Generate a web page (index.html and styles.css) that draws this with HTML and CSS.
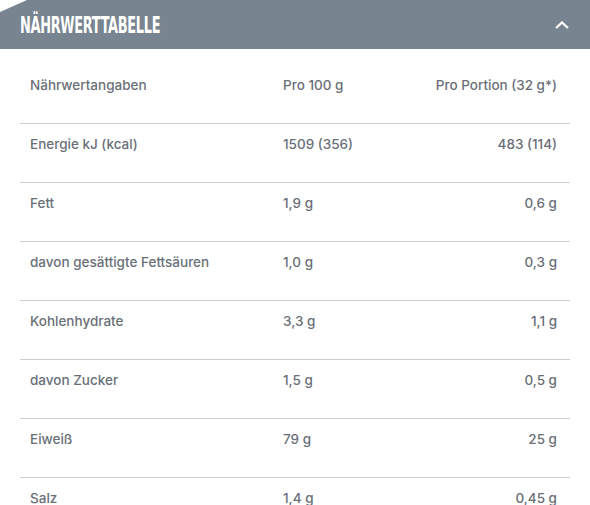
FILE: index.html
```html
<!DOCTYPE html>
<html lang="de">
<head>
<meta charset="utf-8">
<link rel="stylesheet" href="styles.css">
</head>
<body>
<section class="panel">
  <header class="panel-head">
    <h2 class="panel-title"><span>NÄHRWERTTABELLE</span></h2>
    <svg class="chevron" width="14" height="8" viewBox="0 0 14 8"><path d="M1 7 L7 1.5 L13 7" fill="none" stroke="#fff" stroke-width="2.2"/></svg>
  </header>
  <table class="nutri">
    <tr><td>Nährwertangaben</td><td>Pro 100 g</td><td>Pro Portion (32 g*)</td></tr>
    <tr><td>Energie kJ (kcal)</td><td>1509 (356)</td><td>483 (114)</td></tr>
    <tr><td>Fett</td><td>1,9 g</td><td>0,6 g</td></tr>
    <tr><td>davon gesättigte Fettsäuren</td><td>1,0 g</td><td>0,3 g</td></tr>
    <tr><td>Kohlenhydrate</td><td>3,3 g</td><td>1,1 g</td></tr>
    <tr><td>davon Zucker</td><td>1,5 g</td><td>0,5 g</td></tr>
    <tr><td>Eiweiß</td><td>79 g</td><td>25 g</td></tr>
    <tr><td>Salz</td><td>1,4 g</td><td>0,45 g</td></tr>
  </table>
</section>
</body>
</html>
```
FILE: styles.css
```css
html, body { margin: 0; padding: 0; background: #fff; }
body { width: 590px; height: 505px; overflow: hidden; }
.panel { width: 590px; }
.panel-head {
  height: 49px;
  background: #788490;
  display: flex;
  align-items: center;
  justify-content: space-between;
  padding: 0 21px 0 20px;
  box-sizing: border-box;
  clip-path: polygon(27px 0, 100% 0, 100% 100%, 0 100%, 0 12px);
}
.panel-title {
  margin: 0;
  font-family: "DejaVu Sans Condensed", "DejaVu Sans", sans-serif;
  font-weight: bold;
  font-size: 23px;
  line-height: 23px;
  color: #fff;
  letter-spacing: -0.5px;
  padding-top: 2px;
}
.panel-title span { display: inline-block; transform: scaleX(0.625); transform-origin: left center; }
.chevron { display: block; margin-top: 1px; }
.nutri {
  width: 550px;
  margin: 16px 20px 0;
  border-collapse: collapse;
  font-family: Inter, "Liberation Sans", sans-serif;
  font-size: 13.5px;
  font-weight: 500;
  line-height: 18px;
  color: #6a6f78;
}
.nutri td { padding: 11px 10px 29px; white-space: nowrap; }
.nutri tr + tr { border-top: 1px solid #cbcdd0; }
.nutri td:first-child { width: 233px; }
.nutri td:last-child { text-align: right; padding-right: 13px; }
```
